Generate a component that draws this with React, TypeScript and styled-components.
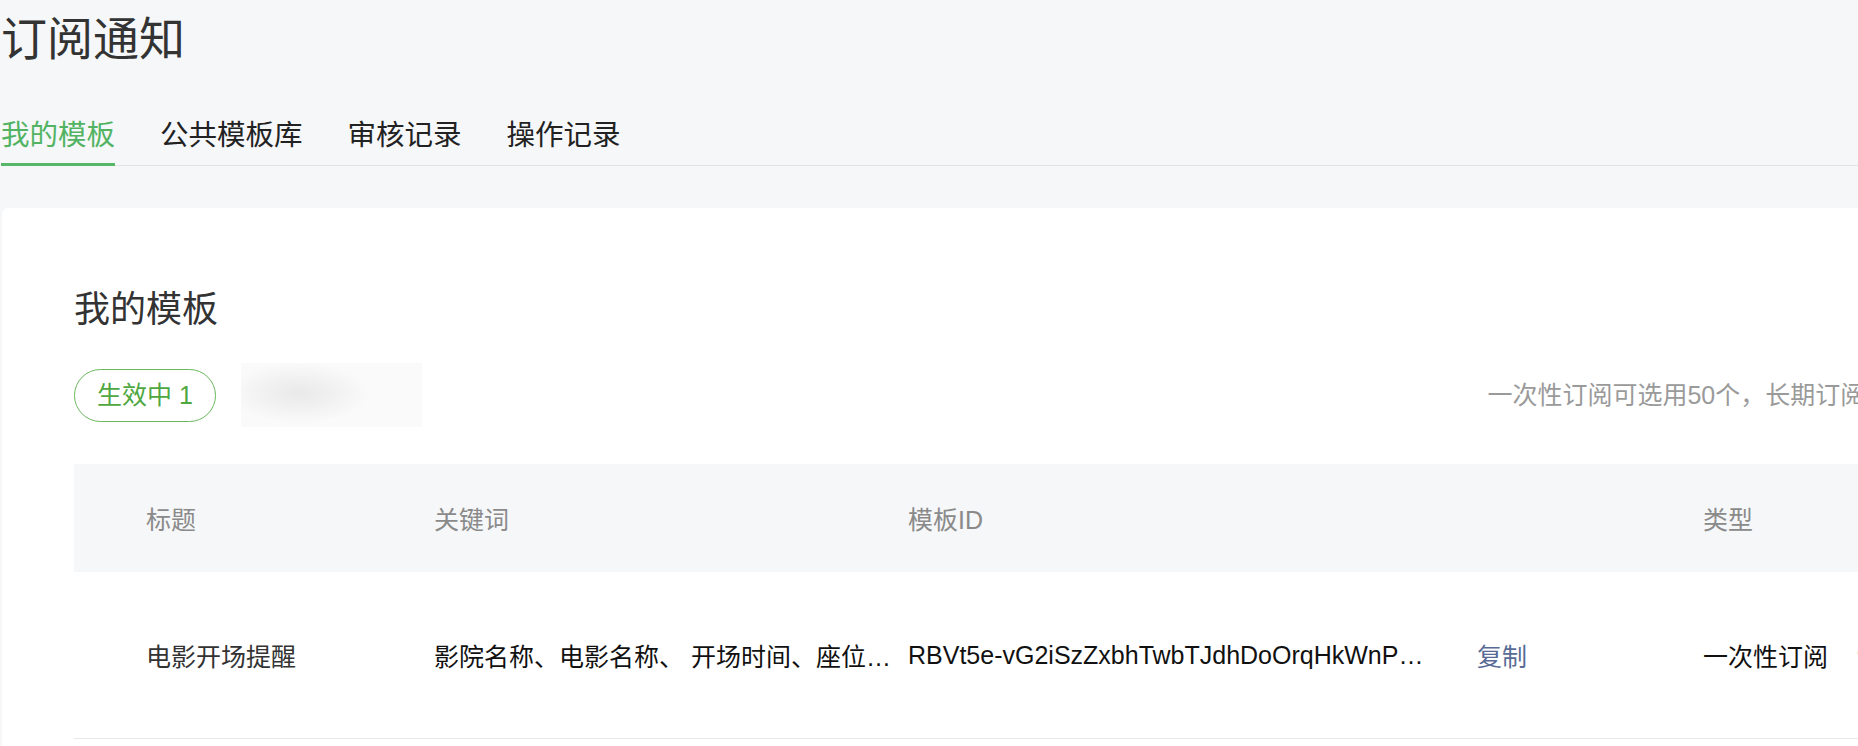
import styled, { createGlobalStyle } from "styled-components";

const GlobalStyle = createGlobalStyle`
  html, body {
    margin: 0;
    padding: 0;
  }
  body {
    background: #f6f7f9;
    font-family: "Liberation Sans", "Noto Sans CJK SC", sans-serif;
    color: #1b1b1b;
    overflow: hidden;
  }
`;

const tabs = ["我的模板", "公共模板库", "审核记录", "操作记录"];

const columns = ["标题", "关键词", "模板ID", "类型", "操作"];

const rows = [
  {
    title: "电影开场提醒",
    keywords: "影院名称、电影名称、 开场时间、座位号、影厅",
    id: "RBVt5e-vG2iSzZxbhTwbTJdhDoOrqHkWnPQx7cLm",
    type: "一次性订阅",
  },
];

const App = () => {
  return (
    <>
      <GlobalStyle />
      <Page>
        <Title>订阅通知</Title>

        <TabBar>
          {tabs.map((t, i) => (
            <Tab key={t} $active={i === 0}>
              {t}
            </Tab>
          ))}
        </TabBar>

        <Card>
          <Heading>我的模板</Heading>

          <Toolbar>
            <Badge>生效中 1</Badge>
            <Blurred />
            <Note>一次性订阅可选用50个，长期订阅可选用50个</Note>
          </Toolbar>

          <Table>
            <HeadRow>
              {columns.map((c) => (
                <HeadCell key={c}>{c}</HeadCell>
              ))}
            </HeadRow>
            {rows.map((r) => (
              <BodyRow key={r.id}>
                <TitleCell>{r.title}</TitleCell>
                <KeywordCell>{r.keywords}</KeywordCell>
                <IdCell>
                  <IdText>{r.id}</IdText>
                  <CopyLink>复制</CopyLink>
                </IdCell>
                <TypeCell>{r.type}</TypeCell>
                <TypeCell>详情</TypeCell>
              </BodyRow>
            ))}
          </Table>
        </Card>
      </Page>
    </>
  );
};

export default App;

const Page = styled.div`
  width: 2064px;
  padding-left: 1px;
  padding-top: 7px;
`;

const Title = styled.h1`
  margin: 0;
  font-size: 46px;
  font-weight: 400;
  line-height: 64px;
  color: #333333;
`;

const TabBar = styled.div`
  display: flex;
  gap: 45px;
  margin-top: 44px;
  border-bottom: 1px solid #e2e3e5;
`;

const Tab = styled.div<{ $active?: boolean }>`
  font-size: 28.5px;
  line-height: 40px;
  padding-bottom: 8px;
  margin-bottom: -1px;
  border-bottom: 3px solid ${({ $active }) => ($active ? "#56b768" : "transparent")};
  color: ${({ $active }) => ($active ? "#52b463" : "#222222")};
  cursor: pointer;
`;

const Card = styled.div`
  margin: 42px 0 0 1px;
  background: #ffffff;
  border-radius: 6px;
  padding: 77px 72px 60px;
`;

const Heading = styled.h2`
  margin: 0;
  font-size: 36px;
  font-weight: 400;
  line-height: 50px;
  color: #333333;
`;

const Toolbar = styled.div`
  display: flex;
  align-items: center;
  height: 64px;
  margin-top: 28px;
`;

const Badge = styled.div`
  box-sizing: border-box;
  height: 53px;
  padding: 0 22px;
  border: 1px solid #68b85a;
  border-radius: 27px;
  font-size: 25px;
  line-height: 51px;
  color: #4fa83f;
  white-space: nowrap;
`;

const Blurred = styled.div`
  margin-left: 25px;
  width: 181px;
  height: 64px;
  background: radial-gradient(
    ellipse 70px 30px at 58px 30px,
    #e9e9e9 0%,
    #f1f1f1 50%,
    #fafafa 100%
  );
`;

const Note = styled.div`
  margin-left: auto;
  font-size: 25px;
  line-height: 64px;
  color: #9a9a9a;
  white-space: nowrap;
`;

const Table = styled.div`
  margin-top: 37px;
  font-size: 25px;
`;

const gridCols = "288px 474px 795px 154px 1fr";

const HeadRow = styled.div`
  display: grid;
  grid-template-columns: ${gridCols};
  align-items: center;
  height: 108px;
  padding-left: 72px;
  background: #f6f7f9;
  color: #8a8a8a;
`;

const HeadCell = styled.div`
  white-space: nowrap;
  &:last-child {
    padding-left: 20px;
  }
`;

const BodyRow = styled.div`
  display: grid;
  grid-template-columns: ${gridCols};
  align-items: center;
  height: 166px;
  padding-left: 72px;
  border-bottom: 1px solid #e8e8ea;
`;

const TitleCell = styled.div`
  color: #333333;
  white-space: nowrap;
`;

const KeywordCell = styled.div`
  padding-right: 14px;
  color: #111111;
  white-space: nowrap;
  overflow: hidden;
  text-overflow: ellipsis;
`;

const IdCell = styled.div`
  display: flex;
  align-items: center;
`;

const IdText = styled.span`
  width: 522px;
  color: #111111;
  white-space: nowrap;
  overflow: hidden;
  text-overflow: ellipsis;
`;

const CopyLink = styled.a`
  margin-left: 47px;
  color: #576b95;
  cursor: pointer;
`;

const TypeCell = styled.div`
  color: #111111;
  white-space: nowrap;
`;
